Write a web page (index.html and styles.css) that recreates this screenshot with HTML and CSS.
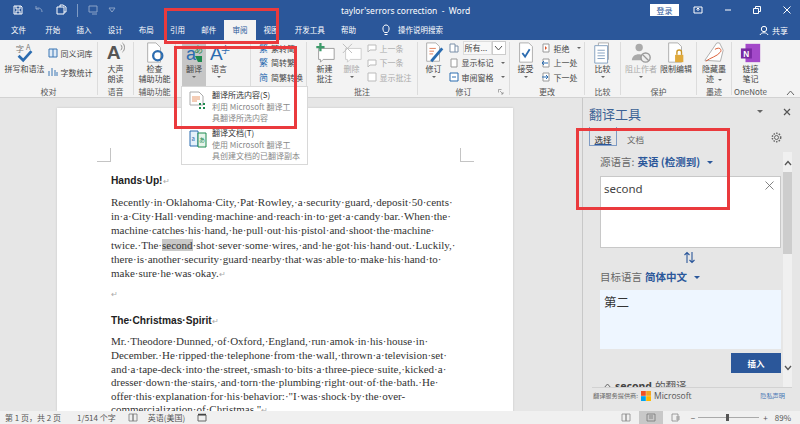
FILE: index.html
```html
<!DOCTYPE html>
<html lang="zh-CN">
  <head>
    <meta charset="UTF-8" />
    <title>taylor'serrors correction - Word</title>
    <link rel="stylesheet" href="styles.css">
  </head>
  <body>
    <div class="window">
      <header class="titlebar">
        <div class="qat">
          <svg width="12" height="12" viewBox="0 0 12 12"><path d="M2 2h7l1 1v7H2zM4 2v3h4V2M4 10V7h4v3" fill="none" stroke="#fff"/></svg>
          <svg width="12" height="12" viewBox="0 0 12 12" class="dim"><path d="M3 2v3h3M3 5c2-2 6-1 6 3" fill="none" stroke="#fff"/></svg>
          <svg width="14" height="12" viewBox="0 0 14 12"><path d="M3 3h7v7H3zM6 3V1h3l3 2v5h-2" fill="none" stroke="#fff"/></svg>
          <span class="sep"></span>
          <svg width="12" height="12" viewBox="0 0 12 12" class="dim"><path d="M2 2h8v6H2zM5 10h5" fill="none" stroke="#fff"/></svg>
          <svg width="8" height="12" viewBox="0 0 8 12" class="dim"><path d="M1 4h6L4 8z" fill="none" stroke="#fff"/></svg>
        </div>
        <div class="doc-title">taylor'serrors correction&nbsp; - &nbsp;Word</div>
        <button class="login">登录</button>
        <div class="winbtns">
          <svg width="10" height="10" viewBox="0 0 10 10"><path d="M1 2h8v6H1zM5 3v3M3.500 4.500 5 3l1.500 1.500" fill="none" stroke="#fff"/></svg>
          <svg width="10" height="10" viewBox="0 0 10 10"><path d="M2 5h6" stroke="#fff"/></svg>
          <svg width="10" height="10" viewBox="0 0 10 10"><path d="M1.500 3.500h5v5h-5zM3.500 3.500v-2h5v5h-2" fill="none" stroke="#fff"/></svg>
          <svg width="10" height="10" viewBox="0 0 10 10"><path d="M1.500 1.500l7 7M8.500 1.500l-7 7" stroke="#fff"/></svg>
        </div>
      </header>

      <nav class="tabs">
        <a class="tab first">文件</a>
        <a class="tab">开始</a>
        <a class="tab">插入</a>
        <a class="tab">设计</a>
        <a class="tab">布局</a>
        <a class="tab">引用</a>
        <a class="tab">邮件</a>
        <a class="tab active">审阅</a>
        <a class="tab">视图</a>
        <a class="tab">开发工具</a>
        <a class="tab">帮助</a>
        <svg class="bulb" width="10" height="12" viewBox="0 0 10 12"><path d="M3.500 8.500C1 6 1.500 1 5 1s4 5 1.500 7.500zM3.500 10.500h3" fill="none" stroke="#fff"/></svg>
        <a class="tab search">操作说明搜索</a>
        <span class="share">
          <svg width="10" height="11" viewBox="0 0 10 11"><circle cx="5" cy="4" r="2.700" fill="none" stroke="#fff"/><path d="M1 10c1-3 7-3 8 0" fill="none" stroke="#fff"/></svg>
          共享
        </span>
      </nav>

      <section class="ribbon">
        <div class="group g-proof">
          <div class="group-body">
            <div class="big wide">
              <svg class="big-icon" width="24" height="24" viewBox="0 0 24 24"><text x="2" y="11" class="ico-t">字</text><text x="13" y="9" class="ico-a">A</text><path d="M5 15l5 5 9-10" fill="none" stroke="#2b6cb0" stroke-width="3"/></svg>
              <span>拼写和语法</span>
            </div>
            <div class="col col-loose">
              <div class="small"><svg width="10" height="10" viewBox="0 0 10 10"><path d="M1 1h8v8H1zM5 1v8" fill="#dfeaf6" stroke="#3b77b5"/></svg>同义词库</div>
              <div class="small"><svg width="10" height="10" viewBox="0 0 10 10"><path d="M1 9V4M4 9V1M7 9V3M9 9V5" stroke="#3b77b5"/></svg>字数统计</div>
            </div>
          </div>
          <div class="group-label">校对</div>
        </div>

        <div class="group g-voice">
          <div class="group-body">
            <div class="big">
              <svg class="big-icon" width="24" height="24" viewBox="0 0 24 24"><text x="2" y="19" class="ico-big">A</text><path d="M17 3c2 1 2 5 0 6M19 1c3 2 3 8 0 10" fill="none" stroke="#888"/></svg>
              <span>大声<br>朗读</span>
            </div>
          </div>
          <div class="group-label">语音</div>
        </div>

        <div class="group g-access">
          <div class="group-body">
            <div class="big">
              <svg class="big-icon" width="24" height="24" viewBox="0 0 24 24"><path d="M4 1h9l5 5v16H4z" fill="#fff" stroke="#aaa"/><circle cx="15" cy="15" r="5" fill="none" stroke="#2b6cb0" stroke-width="2.500"/></svg>
              <span>检查<br>辅助功能</span>
            </div>
          </div>
          <div class="group-label">辅助功能</div>
        </div>

        <div class="group g-lang">
          <div class="group-body">
            <div class="big pressed">
              <svg class="big-icon" width="22" height="22" viewBox="0 0 22 22"><text x="3" y="18" class="ico-lang">a</text><text x="11" y="11" class="ico-zh">あ</text><path d="M12 14h7v6h-4z" fill="#1d8a4e"/></svg>
              <span>翻译</span><i class="caret"></i>
            </div>
            <div class="big">
              <svg class="big-icon" width="22" height="22" viewBox="0 0 22 22"><text x="2" y="18" class="ico-lang2">A</text><text x="13" y="11" class="ico-zh blue">字</text></svg>
              <span>语言</span><i class="caret"></i>
            </div>
          </div>
        </div>

        <div class="group g-conv">
          <div class="group-body">
            <div class="col">
              <div class="small"><span class="zh-ico">繁</span>繁转简</div>
              <div class="small"><span class="zh-ico">繁</span>简转繁</div>
              <div class="small"><span class="zh-ico">简</span>简繁转换</div>
            </div>
          </div>
        </div>

        <div class="group g-comment">
          <div class="group-body">
            <div class="big">
              <svg class="big-icon" width="24" height="24" viewBox="0 0 24 24"><path d="M5 7h17v12H10l-3 3v-3H5z" fill="#fff" stroke="#999"/><path d="M7 1v9M2.500 5.500h9" stroke="#3d9a6a" stroke-width="2.500"/></svg>
              <span>新建<br>批注</span>
            </div>
            <div class="big off">
              <svg class="big-icon" width="24" height="24" viewBox="0 0 24 24"><path d="M5 7h17v12H10l-3 3v-3H5z" fill="#fff" stroke="#ccc"/><path d="M2 2l10 10M12 2L2 12" stroke="#bbb"/></svg>
              <span>删除</span><i class="caret"></i>
            </div>
            <div class="col off">
              <div class="small"><svg width="10" height="10" viewBox="0 0 10 10"><path d="M1 2h8v5H3L1 9z" fill="#fff" stroke="#bbb"/></svg>上一条</div>
              <div class="small"><svg width="10" height="10" viewBox="0 0 10 10"><path d="M1 2h8v5H3L1 9z" fill="#fff" stroke="#bbb"/></svg>下一条</div>
              <div class="small"><svg width="10" height="10" viewBox="0 0 10 10"><path d="M1 1h8v8H1z" fill="#fff" stroke="#bbb"/></svg>显示批注</div>
            </div>
          </div>
          <div class="group-label">批注</div>
        </div>

        <div class="group g-track">
          <div class="group-body">
            <div class="big">
              <svg class="big-icon" width="24" height="24" viewBox="0 0 24 24"><path d="M4 1h10l4 4v16H4z" fill="#fff" stroke="#aaa"/><path d="M7 7h7M7 10h5M7 13h4" stroke="#e07b53"/><path d="M9 21L21 7" stroke="#2b6cb0" stroke-width="3"/></svg>
              <span>修订</span><i class="caret"></i>
            </div>
            <div class="col track-col">
              <div class="small">
                <svg width="10" height="10" viewBox="0 0 10 10"><path d="M1 1h5v8H1zM6 3h3v6H6" fill="#fff" stroke="#7b8fa8"/></svg>
                <span class="combo">所有...</span><span class="combo-btn"><svg width="9" height="6" viewBox="0 0 9 6"><path d="M1 1l3.500 4L8 1" fill="none" stroke="#555"/></svg></span>
              </div>
              <div class="small"><svg width="10" height="10" viewBox="0 0 10 10"><path d="M2 1h6v8H2z" fill="#fff" stroke="#999"/></svg>显示标记<i class="caret side"></i></div>
              <div class="small"><svg width="10" height="10" viewBox="0 0 10 10"><path d="M1 1h8v8H1zM3 5h4" fill="#fff" stroke="#2b6cb0"/></svg>审阅窗格<i class="caret side"></i></div>
            </div>
          </div>
          <div class="group-label">修订</div>
          <svg class="launcher" width="6" height="6" viewBox="0 0 6 6"><path d="M.5.500h3M.5.500v3M2 2l3 3M5 3v2H3" fill="none" stroke="#888" stroke-width=".7"/></svg>
        </div>

        <div class="group g-change">
          <div class="group-body">
            <div class="big">
              <svg class="big-icon" width="24" height="24" viewBox="0 0 24 24"><path d="M5 1h10l4 4v17H5z" fill="#fff" stroke="#aaa"/><path d="M8 12l3 4 5-8" fill="none" stroke="#2b6cb0" stroke-width="2"/></svg>
              <span>接受</span><i class="caret"></i>
            </div>
            <div class="col">
              <div class="small"><svg width="10" height="10" viewBox="0 0 10 10"><path d="M2 1h6v8H2z" fill="#fff" stroke="#999"/><path d="M4 3v4l2-2z" fill="#d9542b"/></svg>拒绝<i class="caret side"></i></div>
              <div class="small"><svg width="10" height="10" viewBox="0 0 10 10"><path d="M2 1h6v8H2z" fill="#fff" stroke="#999"/><path d="M7 5H1M3 3L1 5l2 2" fill="none" stroke="#2b6cb0"/></svg>上一处</div>
              <div class="small"><svg width="10" height="10" viewBox="0 0 10 10"><path d="M2 1h6v8H2z" fill="#fff" stroke="#999"/><path d="M1 5h6M5 3l2 2-2 2" fill="none" stroke="#2b6cb0"/></svg>下一处</div>
            </div>
          </div>
          <div class="group-label">更改</div>
        </div>

        <div class="group g-compare">
          <div class="group-body">
            <div class="big">
              <svg class="big-icon" width="24" height="24" viewBox="0 0 24 24"><path d="M7 1h11v18H7z" fill="#fff" stroke="#aaa"/><path d="M3 4h14v19H3z" fill="#fff" stroke="#7f9cbd"/><path d="M6 9h8M6 12h8M6 15h8M6 18h8" stroke="#7f9cbd"/></svg>
              <span>比较</span><i class="caret"></i>
            </div>
          </div>
          <div class="group-label">比较</div>
        </div>

        <div class="group g-protect">
          <div class="group-body">
            <div class="big off">
              <svg class="big-icon" width="24" height="24" viewBox="0 0 24 24"><circle cx="10" cy="6" r="4" fill="#aaa"/><path d="M2 20c0-9 15-9 15 0z" fill="#aaa"/><circle cx="17" cy="17" r="5" fill="#eee" stroke="#999" stroke-width="1.500"/><path d="M13.500 13.500l7 7" stroke="#999" stroke-width="1.500"/></svg>
              <span>阻止作者</span><i class="caret"></i>
            </div>
            <div class="big">
              <svg class="big-icon" width="24" height="24" viewBox="0 0 24 24"><path d="M4 1h10l4 4v17H4z" fill="#fff" stroke="#aaa"/><rect x="11" y="14" width="9" height="8" fill="#e0a93b"/><path d="M13 14v-3c0-3 5-3 5 0v3" fill="none" stroke="#c99525" stroke-width="1.500"/></svg>
              <span>限制编辑</span>
            </div>
          </div>
          <div class="group-label">保护</div>
        </div>

        <div class="group g-ink">
          <div class="group-body">
            <div class="big">
              <svg class="big-icon" width="24" height="24" viewBox="0 0 24 24"><path d="M2 20L15 1h3l4 8-3 12z" fill="#fff" stroke="#aaa"/><path d="M3 21C8 17 15 16 19 11c2-3-1-6-6-3" fill="none" stroke="#d9542b"/></svg>
              <span>隐藏墨<br>迹<i class="caret side"></i></span>
            </div>
          </div>
          <div class="group-label">墨迹</div>
        </div>

        <div class="group g-note">
          <div class="group-body">
            <div class="big">
              <svg class="big-icon" width="24" height="24" viewBox="0 0 24 24"><rect x="6" y="2" width="16" height="20" fill="#a349c9"/><rect x="1" y="7" width="12" height="11" fill="#7a2aa3"/><text x="3.500" y="16" class="ico-n">N</text></svg>
              <span>链接<br>笔记</span>
            </div>
          </div>
          <div class="group-label">OneNote</div>
        </div>

        <svg class="collapse" width="9" height="6" viewBox="0 0 9 6"><path d="M1 5l3.500-4L8 5" fill="none" stroke="#666"/></svg>
      </section>

      <main class="workspace">
        <div class="doc-area">
          <article class="page">
            <i class="crop crop-l"></i>
            <i class="crop crop-r"></i>
            <h2>Hands·Up!<em>↵</em></h2>
            <p>
              <span>Recently·in·Oklahoma·City,·Pat·Rowley,·a·security·guard,·deposit·50·cents·</span>
              <span>in·a·City·Hall·vending·machine·and·reach·in·to·get·a·candy·bar.·When·the·</span>
              <span>machine·catches·his·hand,·he·pull·out·his·pistol·and·shoot·the·machine·</span>
              <span>twice.·The·<mark>second</mark>·shot·sever·some·wires,·and·he·got·his·hand·out.·Luckily,·</span>
              <span>there·is·another·security·guard·nearby·that·was·able·to·make·his·hand·to·</span>
              <span>make·sure·he·was·okay.<em>↵</em></span>
            </p>
            <p class="empty"><em>↵</em></p>
            <h2>The·Christmas·Spirit<em>↵</em></h2>
            <p class="tight">
              <span>Mr.·Theodore·Dunned,·of·Oxford,·England,·run·amok·in·his·house·in·</span>
              <span>December.·He·ripped·the·telephone·from·the·wall,·thrown·a·television·set·</span>
              <span>and·a·tape-deck·into·the·street,·smash·to·bits·a·three-piece·suite,·kicked·a·</span>
              <span>dresser·down·the·stairs,·and·torn·the·plumbing·right·out·of·the·bath.·He·</span>
              <span>offer·this·explanation·for·his·behavior:·"I·was·shock·by·the·over-</span>
              <span>commercialization·of·Christmas."<em>↵</em></span>
            </p>
          </article>
        </div>

        <aside class="panel">
          <div class="panel-head">
            <h1>翻译工具</h1>
            <i class="caret dark"></i>
            <svg width="8" height="8" viewBox="0 0 8 8"><path d="M1 1l6 6M7 1L1 7" stroke="#555" stroke-width="1.200"/></svg>
          </div>
          <div class="panel-tabs">
            <a class="ptab on">选择</a>
            <a class="ptab">文档</a>
            <svg class="gear" width="11" height="11" viewBox="0 0 11 11"><circle cx="5.500" cy="5.500" r="2" fill="none" stroke="#666"/><circle cx="5.500" cy="5.500" r="4.200" fill="none" stroke="#666" stroke-dasharray="1.500 1.200" stroke-width="1.500"/></svg>
          </div>
          <div class="panel-scroll">
            <div class="panel-content">
              <div class="lang-row">源语言: <b>英语 (检测到)</b><i class="caret blue"></i></div>
              <div class="source">
                second
                <svg class="clear" width="9" height="9" viewBox="0 0 9 9"><path d="M.5.500l8 8M8.500.500l-8 8" stroke="#666" stroke-width=".8"/></svg>
              </div>
              <svg class="swap" width="13" height="13" viewBox="0 0 13 13"><path d="M4 12V1.500M1.500 4L4 1.500 6.500 4M9 1v10.500M6.500 9L9 11.500 11.500 9" fill="none" stroke="#2b579a" stroke-width="1.100"/></svg>
              <div class="lang-row target-row">目标语言 <b>简体中文</b><i class="caret blue"></i></div>
              <div class="target">第二</div>
              <div class="insert-row"><button class="insert">插入</button></div>
              <div class="result-head">
                <svg width="9" height="6" viewBox="0 0 9 6"><path d="M.5 5.500L4.500 1l4 4.500" fill="none" stroke="#666"/></svg>
                <b>second</b> 的翻译
              </div>
            </div>
            <div class="scrollbar">
              <svg width="8" height="6" viewBox="0 0 8 6"><path d="M1 5l3-3.500L7 5" fill="none" stroke="#555" stroke-width="1.300"/></svg>
              <div class="thumb"></div>
              <svg class="down" width="8" height="6" viewBox="0 0 8 6"><path d="M1 1l3 3.500L7 1" fill="none" stroke="#555" stroke-width="1.300"/></svg>
            </div>
          </div>
          <div class="panel-foot">
            <span>翻译服务提供商:</span>
            <svg width="10" height="10" viewBox="0 0 10 10"><path d="M0 0h4.800v4.800H0z" fill="#f25022"/><path d="M5.200 0H10v4.800H5.200z" fill="#f5a623"/><path d="M0 5.200h4.800V10H0z" fill="#00a4ef"/><path d="M5.200 5.200H10V10H5.200z" fill="#ffb900"/></svg>
            <span class="ms">Microsoft</span>
            <a class="privacy">隐私声明</a>
          </div>
        </aside>
      </main>

      <footer class="status">
        <span>第 1 页，共 2 页</span>
        <span class="words">1/514 个字</span>
        <svg width="10" height="9" viewBox="0 0 10 9"><path d="M1 1h4v7H1zM5 1h4v7H5z" fill="none" stroke="#777" stroke-width=".8"/></svg>
        <span class="lang">英语(美国)</span>
        <svg width="10" height="9" viewBox="0 0 10 9"><path d="M1 2h8v6H1z" fill="none" stroke="#666"/><path d="M1 1.500h8" stroke="#444" stroke-width="1.500"/></svg>
        <div class="status-right">
          <svg width="10" height="9" viewBox="0 0 10 9"><path d="M1 1h4v7H1zM5 1h4v7H5z" fill="none" stroke="#888" stroke-width=".8"/></svg>
          <span class="view-on"><svg width="10" height="9" viewBox="0 0 10 9"><path d="M1 1h8v7H1zM3 3h4M3 5h4" fill="none" stroke="#777" stroke-width=".8"/></svg></span>
          <svg width="10" height="9" viewBox="0 0 10 9"><path d="M1 1h6v7H1zM5 4h4M5 6h4" fill="none" stroke="#888" stroke-width=".8"/></svg>
          <span class="zoom-sign minus">−</span>
          <div class="slider"><i></i></div>
          <span class="zoom-sign plus">+</span>
          <span class="pct">89%</span>
        </div>
      </footer>

      <!-- red annotation boxes drawn over the screenshot -->
      <div class="mark-box mark-tabs"></div>
      <div class="menu">
        <div class="menu-item">
          <svg width="18" height="20" viewBox="0 0 18 20"><path d="M1 1h9l4 4v9H1z" fill="#fff" stroke="#aaa"/><path d="M3 6h8M3 8h8M3 10h5" stroke="#e89a6c"/><path d="M10 12h2v2h-2zM14 12h2v2h-2zM10 16h2v2h-2zM14 16h2v2h-2z" fill="#1d8a4e"/></svg>
          <div><strong>翻译所选内容(S)</strong><p>利用 Microsoft 翻译工<br>具翻译所选内容</p></div>
        </div>
        <div class="menu-item">
          <svg width="18" height="20" viewBox="0 0 18 20"><path d="M1 2h8v15H1z" fill="#e4f0fa" stroke="#2b6cb0"/><path d="M9 4h8v14H9z" fill="#e6f4ea" stroke="#1d8a4e"/><text x="2.500" y="12" class="ico-m">a</text><text x="10" y="13" class="ico-m green">あ</text></svg>
          <div><strong>翻译文档(T)</strong><p>使用 Microsoft 翻译工<br>具创建文档的已翻译副本</p></div>
        </div>
      </div>
      <div class="mark-box mark-menu"></div>
      <div class="mark-box mark-panel"></div>
    </div>
  </body>
</html>
```

FILE: styles.css
```css
* {
  box-sizing: border-box;
}
html, body {
  margin: 0;
  height: 424px;
  overflow: hidden;
}
body {
  font-family: "Noto Sans CJK SC", "Noto Sans", sans-serif;
  font-size: 8px;
  color: #444;
}
.window {
  position: relative;
  width: 800px;
  height: 424px;
  display: flex;
  flex-direction: column;
  overflow: hidden;
}

/* title bar */
.titlebar {
  height: 20px;
  background-color: #2b579a;
  color: #fff;
  display: flex;
  align-items: center;
  padding-left: 12px;
}
.qat {
  width: 329px;
  display: flex;
  align-items: center;
  gap: 9px;
}
.qat .sep {
  width: 1px;
  height: 13px;
  background-color: #7f9bc4;
}
.qat .dim {
  opacity: 0.45;
}
.doc-title {
  width: 309px;
  font-family: "Noto Sans", sans-serif;
  font-size: 8.500px;
  white-space: nowrap;
}
.login {
  width: 29px;
  height: 12px;
  padding: 0;
  border: none;
  background-color: #fff;
  color: #2b579a;
  font: 8px "Noto Sans CJK SC", sans-serif;
}
.winbtns {
  margin-left: 14px;
  display: flex;
  gap: 19.500px;
}

/* tabs */
.tabs {
  height: 20px;
  background-color: #2b579a;
  display: flex;
  align-items: center;
  padding-left: 3px;
  color: #fff;
}
.tab {
  height: 20px;
  padding: 0 8.100px;
  line-height: 20px;
  font-size: 7.500px;
  white-space: nowrap;
}
.tab.first {
  margin-right: 3px;
}
.tab.active {
  background-color: #f3f3f3;
  color: #2b579a;
}
.bulb {
  margin-left: 17px;
}
.tab.search {
  padding-left: 7px;
}
.share {
  margin-left: auto;
  margin-right: 12px;
  display: flex;
  align-items: center;
  gap: 3px;
}

/* ribbon */
.ribbon {
  position: relative;
  height: 58px;
  background-color: #f3f3f3;
  border-bottom: 1px solid #d2d2d2;
  display: flex;
  padding-top: 2px;
}
.group {
  position: relative;
  height: 53px;
  display: flex;
  flex-direction: column;
  border-right: 1px solid #dcdcdc;
}
.group-body {
  flex: 1;
  min-height: 0;
  display: flex;
  justify-content: center;
  gap: 3px;
}
.group-label {
  height: 11px;
  line-height: 11px;
  margin-bottom: -2px;
  text-align: center;
  color: #555;
  white-space: nowrap;
}
.g-proof { width: 98px; }
.g-voice { width: 36px; }
.g-access { width: 42px; }
.g-lang { width: 75px; justify-content: flex-start; padding-left: 6px; }
.g-lang .group-body { justify-content: flex-start; gap: 1px; }
.g-conv { width: 56px; padding-left: 8px; }
.g-conv .group-body { justify-content: flex-start; }
.g-comment { width: 111px; }
.g-track { width: 92px; }
.g-change { width: 75px; }
.g-compare { width: 36px; }
.g-protect { width: 76px; }
.g-ink { width: 35px; }
.g-note { width: 37px; border-right: none; }

.big {
  display: flex;
  flex-direction: column;
  align-items: center;
  line-height: 10px;
  text-align: center;
  white-space: nowrap;
  color: #444;
  min-width: 24px;
}
.big-icon {
  height: 22px;
  flex-shrink: 0;
}
.big.pressed {
  background-color: #c6c6c6;
  height: 44px;
}
.big.off {
  color: #aaa;
}
.col {
  display: flex;
  flex-direction: column;
  gap: 4.500px;
  padding-top: 1px;
}
.col-loose {
  padding-top: 6px;
  gap: 9px;
}
.small {
  display: flex;
  align-items: center;
  gap: 3px;
  height: 10px;
  white-space: nowrap;
}
.off .small {
  color: #aaa;
}
.zh-ico {
  color: #2b6cb0;
  font-size: 9px;
}
.caret {
  display: block;
  width: 0;
  height: 0;
  margin-top: 2px;
  border-left: 2px solid transparent;
  border-right: 2px solid transparent;
  border-top: 2px solid #666;
}
.caret.side {
  display: inline-block;
  margin: 0 0 0 4px;
  vertical-align: middle;
}
.combo {
  width: 29px;
  height: 14px;
  line-height: 12px;
  margin-left: 1px;
  background-color: #f8f8f8;
  border: 1px solid #ddd;
  padding-left: 1px;
}
.combo-btn {
  width: 14px;
  height: 14px;
  margin-left: -3px;
  background-color: #fff;
  border: 1px solid #ccc;
  display: flex;
  align-items: center;
  justify-content: center;
}
.launcher {
  position: absolute;
  right: 5px;
  bottom: 0;
}
.collapse {
  position: absolute;
  right: 5px;
  bottom: 1px;
}
.ico-t { font-size: 9px; fill: #777; }
.ico-a { font-size: 8px; fill: #777; }
.ico-big { font: bold 21px "Liberation Sans", sans-serif; fill: #555; }
.ico-lang { font: 18px "Liberation Sans", sans-serif; fill: #2b6cb0; }
.ico-lang2 { font: 19px "Liberation Sans", sans-serif; fill: #2b6cb0; }
.ico-zh { font-size: 9px; fill: #1d8a4e; }
.ico-zh.blue { fill: #2b6cb0; }
.ico-n { font: bold 9px "Liberation Sans", sans-serif; fill: #fff; }
.ico-m { font-size: 6px; fill: #2b6cb0; }
.ico-m.green { fill: #1d8a4e; }

/* document + panel */
.workspace {
  flex: 1;
  min-height: 0;
  display: flex;
  background-color: #e6e6e6;
}
.doc-area {
  width: 582px;
  padding: 10px 0 0 57px;
  overflow: hidden;
}
.page {
  position: relative;
  width: 456px;
  height: 400px;
  background-color: #fff;
  padding: 66px 0 0 54px;
  color: #333;
  box-shadow: 0 0 2px #c4c4c4;
}
.page h2 {
  margin: 0 0 7px;
  font: bold 10.200px/14px "Liberation Sans", sans-serif;
  color: #222;
  white-space: nowrap;
}
.page p {
  margin: 0;
  font: 11px/14.200px "Liberation Serif", serif;
  color: #333;
}
.page p.tight {
  line-height: 13.600px;
}
.page p span {
  display: block;
  white-space: nowrap;
}
.page p.empty {
  margin: 6px 0 14px;
}
.page em {
  font: 8px "Liberation Sans", sans-serif;
  color: #aaa;
}
.page mark {
  background-color: #c8c8c8;
  color: inherit;
}
.crop {
  position: absolute;
  top: 40px;
  width: 14px;
  height: 14px;
  border-bottom: 1px solid #c4c4c4;
}
.crop-l {
  left: 40px;
  border-right: 1px solid #c4c4c4;
}
.crop-r {
  left: 403px;
  border-left: 1px solid #c4c4c4;
}

.panel {
  width: 218px;
  border-left: 1px solid #c8c8c8;
  display: flex;
  flex-direction: column;
}
.panel-head {
  height: 28px;
  display: flex;
  align-items: center;
  padding: 2px 9px 0 6px;
}
.panel-head h1 {
  margin: 0;
  flex: 1;
  font-size: 13px;
  font-weight: normal;
  color: #3c6295;
}
.panel-head svg {
  margin-top: -3px;
}
.caret.dark {
  margin: -3px 20px 0 0;
  border-left-width: 3px;
  border-right-width: 3px;
  border-top-width: 3px;
}
.panel-tabs {
  height: 20px;
  display: flex;
  align-items: flex-start;
  padding: 1px 0 0 6px;
  gap: 5px;
  position: relative;
}
.ptab {
  width: 27px;
  height: 19px;
  padding-top: 5px;
  text-align: center;
  font-size: 8.500px;
  line-height: 14px;
  color: #666;
}
.ptab.on {
  width: 28px;
  color: #222;
  border-left: 1px solid #7f9bc4;
  border-right: 1px solid #7f9bc4;
  border-bottom: 1px solid #7f9bc4;
  text-decoration: underline;
  text-decoration-color: #2b579a;
}
.gear {
  position: absolute;
  right: 18px;
  top: 6px;
}
.panel-scroll {
  height: 236px;
  margin: 6px 8px 0 9px;
  display: flex;
  overflow: hidden;
  border-bottom: 1px solid #d2d2d2;
}
.panel-content {
  width: 191px;
  padding: 2px 0 0 8px;
}
.lang-row {
  font-size: 10.500px;
  line-height: 16px;
  height: 16px;
  color: #666;
  white-space: nowrap;
  display: flex;
  align-items: center;
  gap: 3px;
}
.lang-row b {
  color: #2b579a;
}
.caret.blue {
  margin: 0 0 0 4px;
  border-left-width: 3px;
  border-right-width: 3px;
  border-top: 3px solid #2b579a;
}
.source {
  position: relative;
  width: 181px;
  height: 72px;
  margin-top: 6px;
  background-color: #fff;
  border: 1px solid #c8c8c8;
  padding: 3px;
  font: 11.500px/18px "Noto Sans", sans-serif;
  color: #444;
}
.clear {
  position: absolute;
  right: 6px;
  top: 4px;
}
.swap {
  display: block;
  margin: 3px 0 0 83px;
}
.target-row {
  margin-top: 5px;
}
.target {
  width: 181px;
  height: 59px;
  margin-top: 5px;
  background-color: #eef6ff;
  padding: 3px 4px;
  font-size: 12.500px;
  line-height: 18px;
  color: #333;
}
.insert-row {
  display: flex;
  justify-content: flex-end;
  width: 181px;
  margin-top: 4px;
}
.insert {
  width: 50px;
  height: 20px;
  padding: 0;
  border: none;
  background-color: #2b579a;
  color: #fff;
  font: bold 8.500px "Noto Sans CJK SC", sans-serif;
}
.result-head {
  margin: 7px 0 0 3px;
  font-size: 10.500px;
  line-height: 12px;
  color: #555;
  white-space: nowrap;
  display: flex;
  align-items: center;
  gap: 3px;
}
.result-head b {
  font-family: "Noto Sans", sans-serif;
  color: #444;
}
.scrollbar {
  width: 9px;
  background-color: #f0f0f0;
  display: flex;
  flex-direction: column;
  align-items: center;
  padding-top: 8px;
}
.thumb {
  width: 9px;
  height: 82px;
  margin-top: 6px;
  background-color: #cdcdcd;
}
.down {
  margin-top: auto;
  margin-bottom: 16px;
}
.panel-foot {
  height: 15px;
  display: flex;
  align-items: center;
  padding: 0 15px 0 10px;
  font-size: 6.200px;
  color: #666;
  gap: 3px;
}
.ms {
  font: 8.500px "Open Sans", sans-serif;
  color: #555;
}
.privacy {
  margin-left: auto;
  color: #4a78b5;
}

/* status bar */
.status {
  position: relative;
  height: 13px;
  background-color: #f0f0f0;
  display: flex;
  align-items: center;
  padding-left: 5px;
  font-size: 8px;
  color: #555;
  white-space: nowrap;
}
.words {
  margin-left: 16px;
}
.status svg {
  flex-shrink: 0;
}
.status > svg {
  margin-left: 12px;
}
.lang {
  margin-left: 10px;
}
.status-right {
  margin-left: auto;
  display: flex;
  align-items: center;
  height: 13px;
  gap: 8px;
  padding-right: 9px;
}
.view-on {
  width: 24px;
  height: 13px;
  background-color: #c8c8c8;
  display: flex;
  align-items: center;
  justify-content: center;
}
.zoom-sign {
  font-size: 8px;
}
.minus {
  margin-left: 2px;
  margin-right: -5px;
}
.plus {
  margin-left: -4px;
  margin-right: -1px;
}
.slider {
  position: relative;
  width: 61px;
  height: 1px;
  background-color: #aaa;
}
.slider i {
  position: absolute;
  left: 28px;
  top: -3px;
  width: 3px;
  height: 7px;
  background-color: #555;
}

/* things lying over the page */
.menu {
  position: absolute;
  left: 181px;
  top: 86px;
  width: 127px;
  height: 79px;
  background-color: #fff;
  border: 1px solid #d8d8d8;
  padding: 1px 0 0 7px;
}
.menu-item {
  display: flex;
  gap: 5px;
  height: 38px;
  padding-top: 1px;
}
.menu-item svg {
  margin-top: 2px;
  flex-shrink: 0;
}
.menu-item strong {
  display: block;
  font-weight: normal;
  color: #333;
  line-height: 11px;
}
.menu-item p {
  margin: 1px 0 0;
  color: #888;
  line-height: 11px;
  white-space: nowrap;
}
.mark-box {
  position: absolute;
  border: 3px solid #ea3a3d;
  z-index: 5;
}
.mark-tabs {
  left: 164px;
  top: 8px;
  width: 115px;
  height: 36px;
}
.mark-menu {
  left: 174px;
  top: 46px;
  width: 123px;
  height: 83px;
}
.mark-panel {
  left: 576px;
  top: 128px;
  width: 154px;
  height: 82px;
}
```
